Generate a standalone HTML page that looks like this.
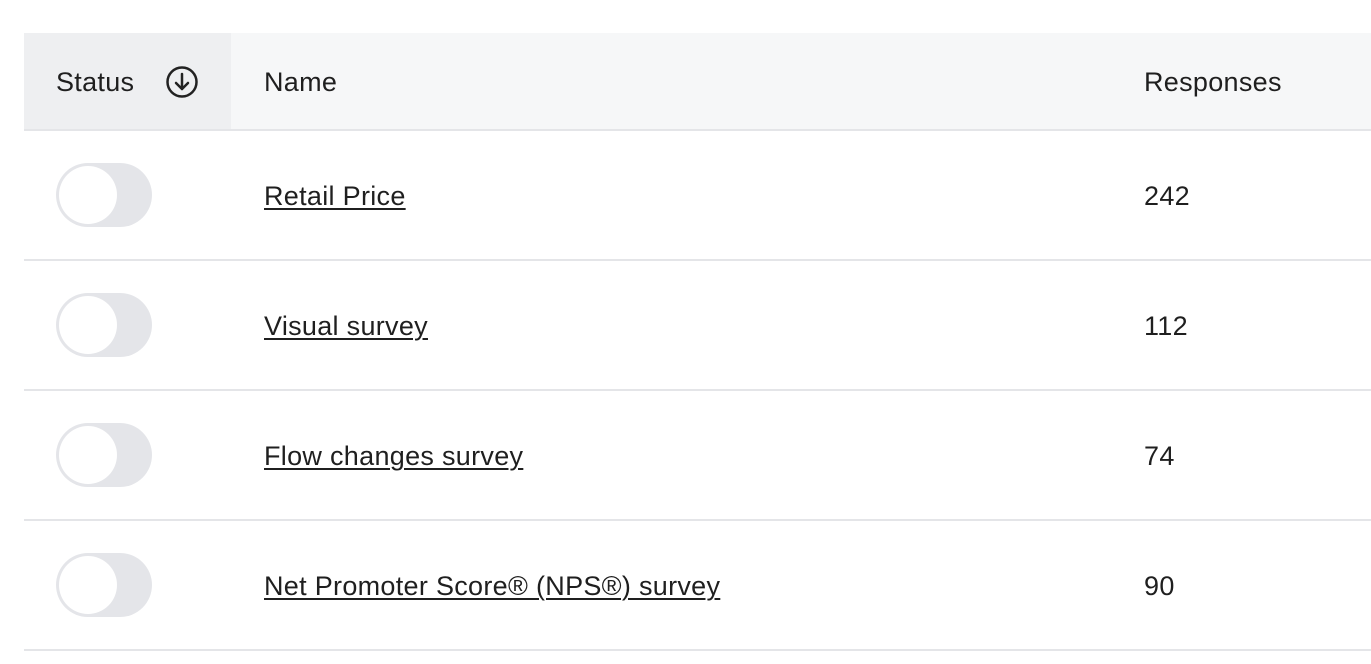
<!DOCTYPE html><html><head><style>
body{margin:0;background:#fff;font-family:"Liberation Sans",Arial,sans-serif;color:#1f1f1f;width:1371px;height:664px;overflow:hidden;position:relative}
.h{position:absolute;top:33px;left:24px;right:0;height:96px;background:#f6f7f8;border-bottom:2px solid #e4e5e8}
.hs{position:absolute;left:0;top:0;width:207px;height:96px;background:#eeeff1}
.t{position:absolute;font-size:27px;line-height:30px;letter-spacing:0.3px}
.row{position:absolute;left:24px;right:0;height:128px;border-bottom:2px solid #e4e5e8}
.tg{position:absolute;left:32px;top:32px;width:96px;height:64px;border-radius:32px;background:#e4e5e9}
.tg:after{content:"";position:absolute;left:3px;top:3px;width:58px;height:58px;border-radius:50%;background:#fff}
a{color:#1f1f1f;text-decoration:underline;text-underline-offset:3px;text-decoration-thickness:2px}
</style></head><body>
<div class="h"><div class="hs"></div>
<div class="t" style="left:32px;top:34px">Status</div>
<svg style="position:absolute;left:141px;top:32px" width="34" height="34" viewBox="0 0 34 34"><circle cx="17" cy="17" r="14.5" fill="none" stroke="#222" stroke-width="2.5"/><path d="M17 9v15M11 18l6 6 6-6" fill="none" stroke="#222" stroke-width="2.5" stroke-linecap="round" stroke-linejoin="round"/></svg>
<div class="t" style="left:240px;top:34px">Name</div>
<div class="t" style="left:1120px;top:34px">Responses</div>
</div>
<div class="row" style="top:131px"><div class="tg"></div><div class="t" style="left:240px;top:50px"><a>Retail Price</a></div><div class="t" style="left:1120px;top:50px">242</div></div>
<div class="row" style="top:261px"><div class="tg"></div><div class="t" style="left:240px;top:50px"><a>Visual survey</a></div><div class="t" style="left:1120px;top:50px">112</div></div>
<div class="row" style="top:391px"><div class="tg"></div><div class="t" style="left:240px;top:50px"><a>Flow changes survey</a></div><div class="t" style="left:1120px;top:50px">74</div></div>
<div class="row" style="top:521px"><div class="tg"></div><div class="t" style="left:240px;top:50px"><a>Net Promoter Score® (NPS®) survey</a></div><div class="t" style="left:1120px;top:50px">90</div></div>
</body></html>
